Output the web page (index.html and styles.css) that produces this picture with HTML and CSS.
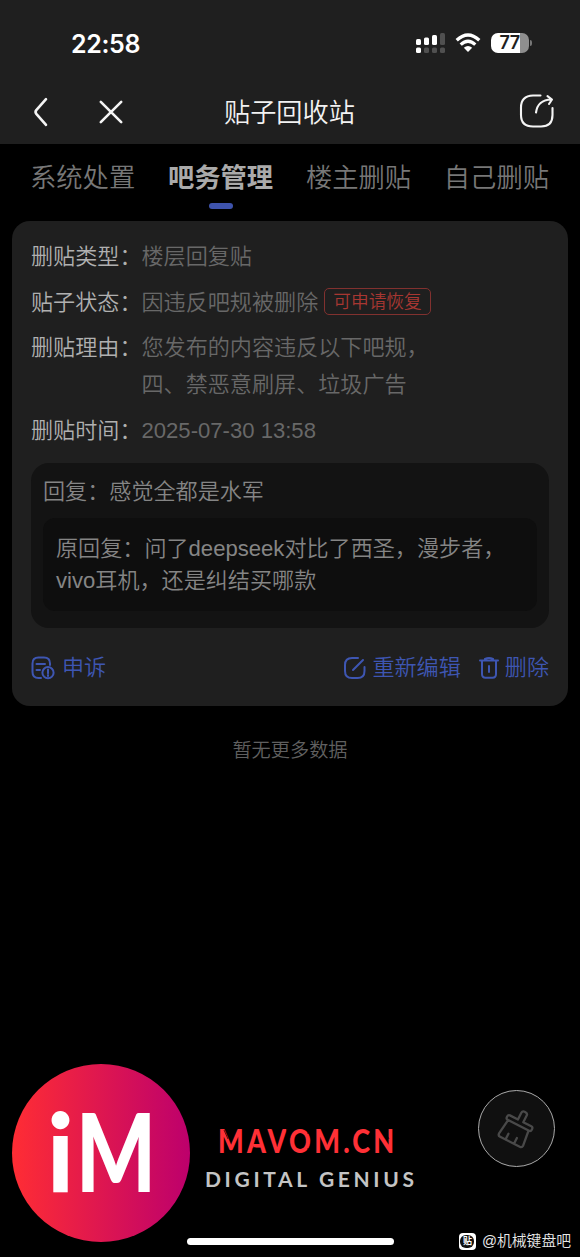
FILE: index.html
```html
<!DOCTYPE html>
<html lang="zh-CN">
<head>
<meta charset="utf-8">
<title>贴子回收站</title>
<link rel="stylesheet" href="styles.css">
</head>
<body>
<div class="screen">
  <header class="header">
    <div class="status">
      <span class="clock">22:58</span>
      <div class="status-icons">
        <svg class="signal" width="30" height="20" viewBox="0 0 30 20">
          <g fill="#fff"><rect x="0" y="6" width="5" height="6" rx="1.5"/><rect x="8" y="4.500" width="5" height="7.500" rx="1.500"/><rect x="16" y="2" width="5" height="10" rx="1.500"/><rect x="0" y="14.500" width="5" height="5.500" rx="1.500"/></g>
          <g fill="#505050"><rect x="24" y="0" width="5" height="12" rx="1.500"/><rect x="8" y="14.500" width="5" height="5.500" rx="1.500"/><rect x="16" y="14.500" width="5" height="5.500" rx="1.500"/><rect x="24" y="14.500" width="5" height="5.500" rx="1.500"/></g>
        </svg>
        <svg class="wifi" width="26" height="20" viewBox="0 0 26 20" fill="none" stroke="#fff" stroke-width="3.300">
          <path d="M1.700 7.300Q13-3.300 24.300 7.300"/><path d="M5.700 11.600Q13 4.900 20.300 11.600"/><path d="M8.800 14.800Q13 11.300 17.200 14.800L13 19Z" fill="#fff" stroke="none"/>
        </svg>
        <div class="battery"><span>77</span></div>
        <i class="battery-tip"></i>
      </div>
    </div>
    <nav class="nav">
      <svg class="back" width="16" height="30" viewBox="0 0 16 30"><path d="M13 2.200L3.300 13.100Q1.800 15 3.300 16.900L13 27.800"/></svg>
      <svg class="close" width="26" height="26" viewBox="0 0 26 26"><path d="M2.800 2.800L23.200 23.200M23.200 2.800L2.800 23.200"/></svg>
      <h1 class="title">贴子回收站</h1>
      <svg class="share" width="36" height="36" viewBox="0 0 36 36"><path d="M21.500 2.500H14Q2 3 2 14.500V22Q2 33.500 14 33.500H22Q33.500 33.500 33.500 22V15M17 19.500C18 12 21.500 7 32.500 6.500M28.500 3.200L33 6.500L30 11"/></svg>
    </nav>
  </header>
  <div class="tabs">
    <span class="tab">系统处置</span>
    <span class="tab active">吧务管理</span>
    <span class="tab">楼主删贴</span>
    <span class="tab">自己删贴</span>
  </div>
  <main class="card">
    <div class="row"><span class="label">删贴类型：</span><span class="value">楼层回复贴</span></div>
    <div class="row"><span class="label">贴子状态：</span><span class="value">因违反吧规被删除</span><span class="badge">可申请恢复</span></div>
    <div class="row"><span class="label">删贴理由：</span><span class="value">您发布的内容违反以下吧规，<br>四、禁恶意刷屏、垃圾广告</span></div>
    <div class="row"><span class="label">删贴时间：</span><span class="value">2025-07-30 13:58</span></div>
    <section class="reply">
      <p class="reply-text">回复：感觉全都是水军</p>
      <p class="quote">原回复：问了deepseek对比了西圣，漫步者，<br>vivo耳机，还是纠结买哪款</p>
    </section>
    <div class="actions">
      <a class="action appeal"><svg width="24" height="24" viewBox="0 0 24 24"><path d="M10 22H7.500Q1.500 22 1.500 16V7.500Q1.500 1.500 7.500 1.500H13Q19 1.500 19 7.500V9M5.500 8H14M5.500 14H9"/><circle cx="17" cy="16.700" r="5.600"/><path d="M17 13.600V17.200M17 18.900V20"/></svg><span>申诉</span></a>
      <a class="action edit"><svg width="23" height="24" viewBox="0 0 23 24"><path d="M15 2H9Q2 2 2 9V15Q2 22 9 22H14.500Q21.500 22 21.500 15V11M10 14L20 4"/></svg><span>重新编辑</span></a>
      <a class="action"><svg width="20" height="24" viewBox="0 0 20 24"><path d="M1 4.500H19M6 3Q10 1 14 3M3 4.500V18Q3 21.700 6.500 21.700H13.500Q17 21.700 17 18V4.500M10 10V16"/></svg><span>删除</span></a>
    </div>
  </main>
  <p class="empty">暂无更多数据</p>
  <footer class="footer">
    <svg class="logo" width="178" height="178" viewBox="0 0 178 178">
      <defs><linearGradient id="brand"><stop offset="0" stop-color="#ff2d34"/><stop offset="1" stop-color="#bd006c"/></linearGradient></defs>
      <circle cx="89" cy="89" r="89" fill="url(#brand)"/>
      <text class="logo-text" x="35" y="128" textLength="27" lengthAdjust="spacingAndGlyphs">i</text>
      <text class="logo-text" x="64" y="128" textLength="80" lengthAdjust="spacingAndGlyphs">M</text>
    </svg>
    <div class="brand">
      <svg width="230" height="70" viewBox="0 0 230 70">
        <text class="brand-name" transform="translate(12 29) scale(.82 1)" textLength="215">MAVOM.CN</text>
        <text class="brand-sub" x="-1" y="63" textLength="209">DIGITAL GENIUS</text>
        <path class="cuts" d="M102 3V10M102 24V31M47 23L54 26M80 3L83 14M160 21L168 16M18 6L22 15M178 6L183 15"/>
      </svg>
    </div>
    <button class="clean" aria-label="清理"><svg width="40" height="42" viewBox="0 0 40 42"><g transform="translate(19.300 21.300) rotate(27)"><path d="M-12-4.500Q-14-4.500-14-7T-12-9.500H-3V-17Q-3-19.500 0-19.500T3-17V-9.500H12Q14-9.500 14-7T12-4.500ZM-11.500-4.500L-13.500 11.500Q-13.500 14 -11 14H11Q13.500 14 13.500 11.500L11.500-4.500M-5 14V7.500M4.500 14V7.500"/></g></svg></button>
  </footer>
  <div class="home-bar"></div>
  <div class="watermark"><span class="tie"><b>贴</b></span>@机械键盘吧</div>
</div>
</body>
</html>
```
FILE: styles.css
```css
* { box-sizing: border-box; }
body { margin: 0; background: #000; font-family: "Liberation Sans", "Noto Sans CJK SC", sans-serif; font-weight: 350; }
h1, p { margin: 0; font-weight: inherit; }
svg { display: block; flex: none; }
.screen { position: relative; width: 580px; height: 1257px; display: flex; flex-direction: column; overflow: hidden; }
.header { height: 144px; background: #1f1f1f; flex: none; }
.status { height: 80px; padding: 6px 48px 0 71px; display: flex; align-items: center; justify-content: space-between; color: #fff; }
.clock { font: 600 25px/30px Inter, sans-serif; letter-spacing: -.35px; padding-top: 1px; }
.status-icons { display: flex; align-items: center; }
.wifi { margin: 0 10px 0 9px; }
.battery { width: 38px; height: 20px; border-radius: 7px; background: linear-gradient(90deg, #fff 77%, #8e8e8e 77%); color: #1f1f1f; padding-right: 1px; text-align: center; font: 600 18px/20px Inter, sans-serif; letter-spacing: -.5px; }
.battery-tip { width: 2px; height: 6px; margin-left: 1px; border-radius: 0 2px 2px 0; background: #777; }
.nav { height: 64px; padding: 0 25px 0 33px; display: flex; align-items: center; }
.nav svg { fill: none; stroke: #f4f4f4; stroke-width: 2.600; stroke-linecap: round; stroke-linejoin: round; }
.nav .share { margin-left: auto; margin-bottom: 2px; stroke-width: 2.100; }
.close { margin-left: 49px; }
.title { margin: 2px 0 0 100px; color: #f2f2f2; font-size: 26.200px; line-height: 38px; }
.tabs { height: 77px; flex: none; padding: 13px 31px 0 30px; display: flex; justify-content: space-between; align-items: flex-start; color: #777; font-size: 26.300px; line-height: 42px; }
.tab.active { color: #aaa; font-weight: 700; display: flex; flex-direction: column; align-items: center; }
.tab.active::after { content: ""; width: 24px; height: 6px; margin-top: 4px; border-radius: 3px; background: #3e53ac; }
.card { flex: none; height: 485px; margin: 0 12px; padding: 18px 19px 0; background: #1f1f1f; border-radius: 18px; font-size: 22.100px; }
.row { display: flex; line-height: 36.700px; margin-bottom: 9px; color: #686868; }
.label { color: #b0b0b0; }
.badge { height: 27px; margin: 3px 0 0 6px; padding: 0 8px; border: 1px solid #81312f; border-radius: 5px; color: #a83732; font-size: 17.700px; line-height: 26px; }
.reply { height: 165px; margin-top: 13px; padding: 12px 12px 0; border-radius: 18px; background: #131313; color: #858585; }
.reply-text { line-height: 34px; margin-bottom: 9px; }
.quote { height: 93px; padding: 15px 13px; border-radius: 12px; background: #0e0e0e; line-height: 32.500px; }
.actions { display: flex; align-items: center; height: 80px; color: #3e56b2; }
.action { display: flex; align-items: center; gap: 6px; margin-left: 18px; }
.action span { line-height: 32px; margin-top: 1px; }
.action svg { fill: none; stroke: #3e56b2; stroke-width: 2; stroke-linecap: round; stroke-linejoin: round; }
.appeal { margin: 0 auto 0 0; gap: 7px; }
.empty { margin-top: 31px; line-height: 28px; text-align: center; color: #606060; font-size: 19.200px; }
.footer { margin-top: auto; padding: 0 25px 15px 12px; display: flex; align-items: flex-start; }
.logo-text { font: 900 109px Lato, sans-serif; fill: #fff; }
.brand { margin: 60px 0 0 16px; }
.brand svg { overflow: visible; }
.brand-name { font: 900 33px Lato, sans-serif; fill: #ff3036; }
.brand-sub { font: 700 21px Lato, sans-serif; fill: #c4c4c4; }
.cuts { fill: none; stroke: #000; stroke-width: 1; opacity: .7; }
.clean { width: 77px; height: 77px; margin: 26px 0 0 auto; padding: 0; border: 1.500px solid #aaa; border-radius: 50%; background: #101010; display: flex; align-items: center; justify-content: center; }
.clean svg { fill: none; stroke: #494949; stroke-width: 2.300; stroke-linejoin: round; stroke-linecap: round; }
.home-bar { position: absolute; left: 187px; top: 1238px; width: 207px; height: 7px; border-radius: 4px; background: #fff; }
.watermark { position: absolute; right: 9px; top: 1230px; display: flex; align-items: center; color: #e8e8e8; font-size: 14.800px; line-height: 22px; }
.tie { width: 17px; height: 17px; margin-right: 6px; border-radius: 4px; background: #fff; display: grid; place-items: center; }
.tie b { width: 14px; height: 13px; border-radius: 6px; background: #111; color: #fff; font-size: 9px; line-height: 12px; text-align: center; }
```
